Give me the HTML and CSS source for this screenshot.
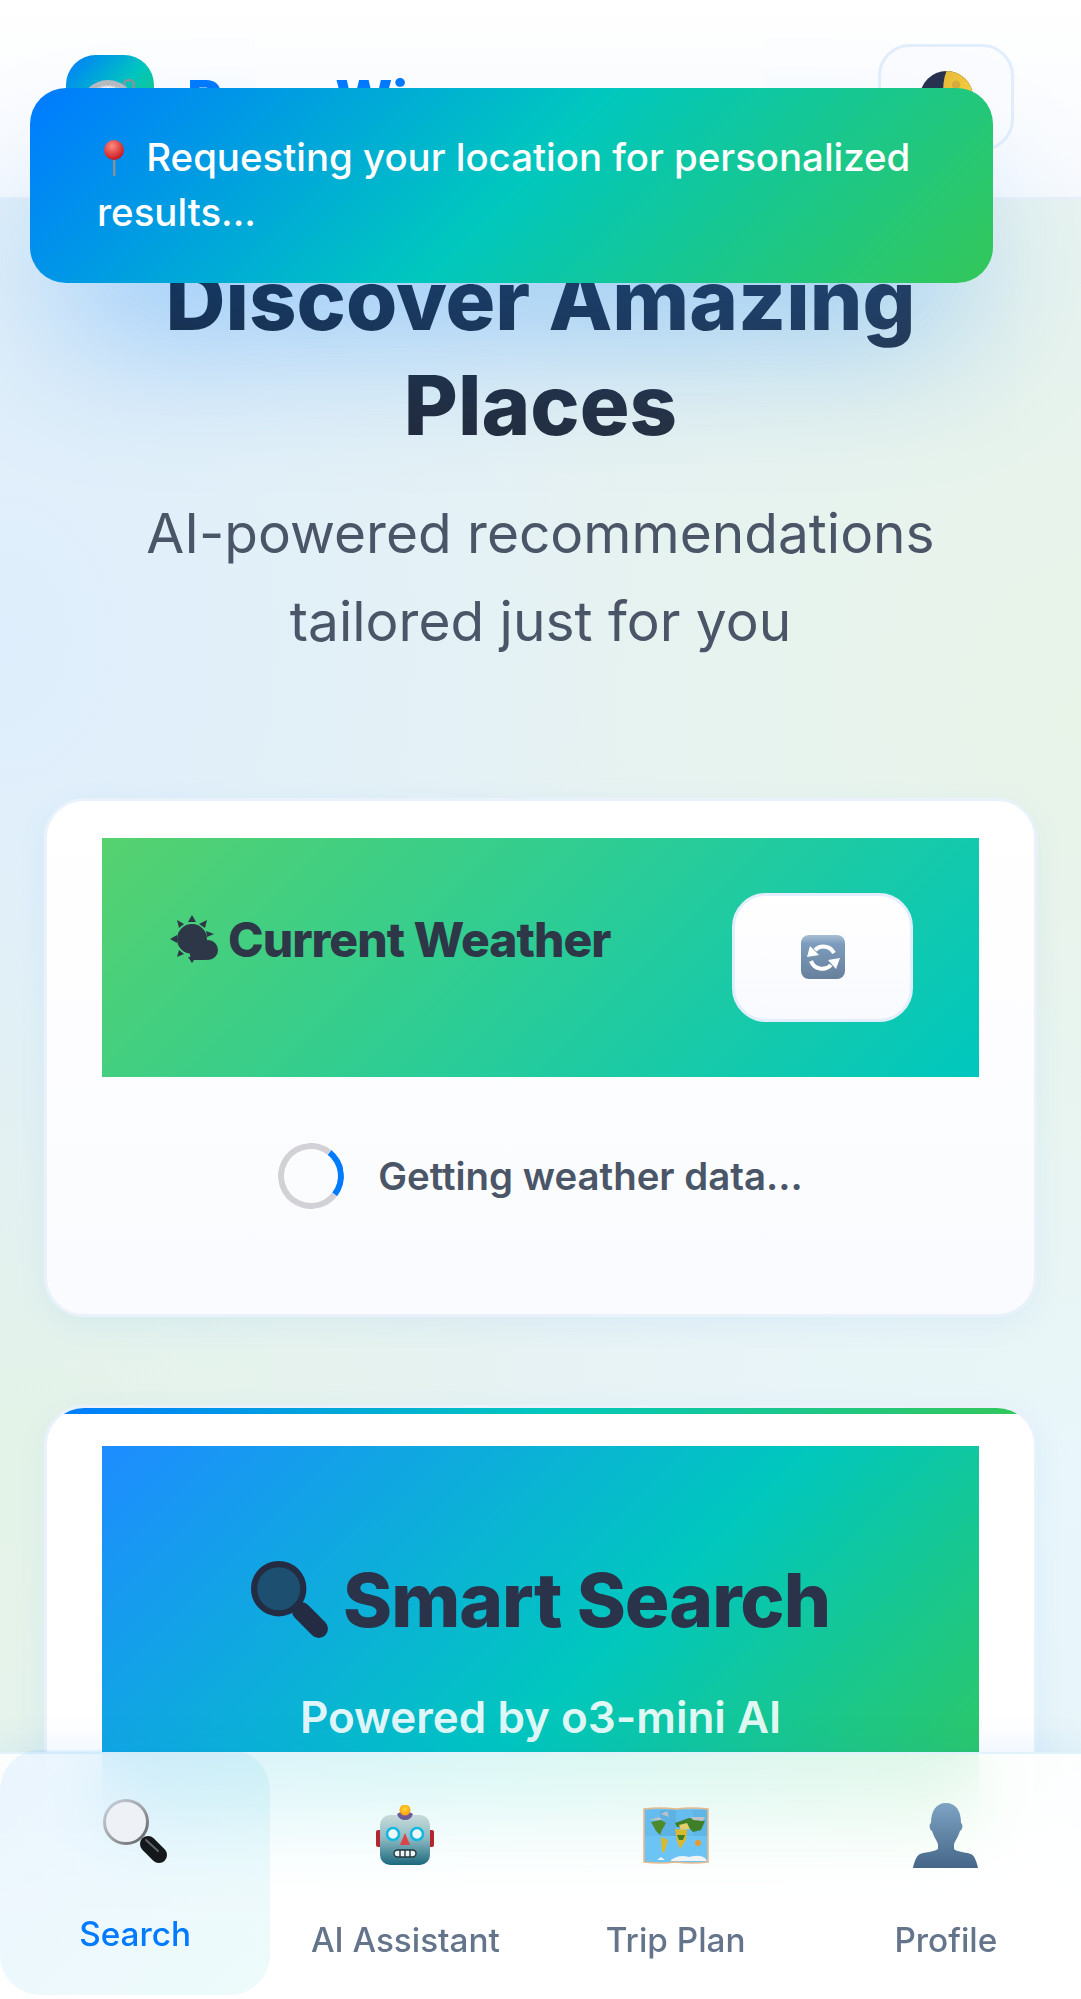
FILE: index.html
```html
<!DOCTYPE html>
<html lang="en">
<head>
    <meta charset="UTF-8">
    <meta name="viewport" content="width=device-width, initial-scale=1.0">
    <title>RoamWise</title>
    <link rel="stylesheet" href="styles.css">
</head>
<body>
    <div class="app">
        <header class="app-header">
            <div class="brand">
                <div class="brand-logo">
                    <svg class="brand-compass" viewBox="0 0 60 60">
                        <circle cx="49" cy="9" r="5" fill="none" stroke="#8e9399" stroke-width="2.5"/>
                        <circle cx="28" cy="32" r="28" fill="#b9bcc0"/>
                        <circle cx="28" cy="32" r="22" fill="#f4f5f6" stroke="#d5d7da" stroke-width="2" stroke-dasharray="2 2"/>
                        <path d="M40 20 L32 30 L28 28 Z" fill="#e0403a"/>
                    </svg>
                </div>
                <span class="brand-name">RoamWise</span>
            </div>
            <button class="theme-toggle">
                <svg class="theme-moon" viewBox="0 0 50 50">
                    <defs>
                        <linearGradient id="moonLight" x1="0" y1="0" x2="1" y2="1">
                            <stop offset="0" stop-color="#e8b93a"/>
                            <stop offset="1" stop-color="#ffd83a"/>
                        </linearGradient>
                    </defs>
                    <circle cx="25" cy="25" r="25" fill="#27324e"/>
                    <path d="M25 0 A25 25 0 0 1 25 50 Q21 38 22 25 Q21 10 25 0 Z" fill="url(#moonLight)"/>
                    <circle cx="34" cy="13" r="4" fill="#d9ab3a"/>
                </svg>
            </button>
        </header>

        <div class="toast">
            <svg class="toast-pin" viewBox="0 0 24 36">
                <defs>
                    <radialGradient id="pinHead" cx="0.4" cy="0.3" r="0.7">
                        <stop offset="0" stop-color="#ff8a80"/>
                        <stop offset="1" stop-color="#c9161d"/>
                    </radialGradient>
                </defs>
                <rect x="11" y="16" width="2.4" height="20" fill="#8c8f94"/>
                <circle cx="12" cy="10" r="10" fill="url(#pinHead)"/>
            </svg>
            Requesting your location for personalized results...
        </div>

        <main class="content">
            <section class="hero">
                <h1 class="hero-title">Discover Amazing Places</h1>
                <p class="hero-subtitle">AI-powered recommendations tailored just for you</p>
            </section>

            <section class="card weather-card">
                <div class="weather-header">
                    <h2 class="weather-title">
                        <svg class="weather-icon" viewBox="0 0 48 48">
                            <g fill="#2d3748">
                                <path d="M22 0 L26 7 L18 7 Z"/>
                                <path d="M7 5 L14 9 L9 13 Z"/>
                                <path d="M37 5 L35 13 L29 9 Z"/>
                                <path d="M0 24 L7 20 L7 28 Z"/>
                                <path d="M44 19 L37 22 L36 16 Z"/>
                                <path d="M7 42 L9 35 L14 39 Z"/>
                                <path d="M22 48 L18 42 L26 42 Z"/>
                                <circle cx="22" cy="24" r="15"/>
                                <circle cx="38" cy="35" r="10"/>
                                <rect x="20" y="32" width="20" height="13" rx="5"/>
                            </g>
                        </svg>
                        <span>Current Weather</span>
                    </h2>
                    <button class="refresh-button">
                        <svg class="refresh-icon" viewBox="0 0 44 44">
                            <defs>
                                <linearGradient id="refreshFill" x1="0" y1="0" x2="0" y2="1">
                                    <stop offset="0" stop-color="#a9bfd4"/>
                                    <stop offset="0.2" stop-color="#7d9cbd"/>
                                    <stop offset="1" stop-color="#67809c"/>
                                </linearGradient>
                            </defs>
                            <rect width="44" height="44" rx="8" fill="url(#refreshFill)"/>
                            <g fill="none" stroke="#fff" stroke-width="4">
                                <path d="M14 15 A12 12 0 0 1 33 18"/>
                                <path d="M30 30 A12 12 0 0 1 10 26"/>
                            </g>
                            <path d="M6 22 L18 20 L9 11 Z M39 23 L27 25 L35 34 Z" fill="#fff"/>
                        </svg>
                    </button>
                </div>
                <div class="weather-loading">
                    <div class="spinner"></div>
                    <span class="loading-text">Getting weather data...</span>
                </div>
            </section>

            <section class="card search-card">
                <div class="search-header">
                    <h2 class="search-title">
                        <svg class="search-title-icon" viewBox="0 0 76 76">
                            <circle cx="27" cy="27" r="24" fill="#1c4f70" stroke="#232c43" stroke-width="6"/>
                            <path d="M49 49 L66 66" stroke="#232c43" stroke-width="18" stroke-linecap="round"/>
                        </svg>
                        <span>Smart Search</span>
                    </h2>
                    <p class="search-subtitle">Powered by o3-mini AI</p>
                </div>
            </section>
        </main>

        <nav class="bottom-nav">
            <a class="nav-item active">
                <span class="nav-icon">
                    <svg class="icon-search" viewBox="0 0 64 66">
                        <defs>
                            <linearGradient id="lensRing" x1="0" y1="0" x2="1" y2="1">
                                <stop offset="0" stop-color="#c9d3e4"/>
                                <stop offset="0.5" stop-color="#a2a5a9"/>
                                <stop offset="1" stop-color="#5c5d5f"/>
                            </linearGradient>
                        </defs>
                        <path d="M45 46 L56 57" stroke="#15181b" stroke-width="16" stroke-linecap="round"/>
                        <path d="M43 42 L55 53" stroke="#5f656a" stroke-width="2" stroke-linecap="round"/>
                        <circle cx="23" cy="24" r="21.5" fill="#eef1f5" stroke="url(#lensRing)" stroke-width="3"/>
                    </svg>
                </span>
                <span class="nav-label">Search</span>
            </a>
            <a class="nav-item">
                <span class="nav-icon">
                    <svg class="icon-robot" viewBox="0 0 58 60">
                        <defs>
                            <linearGradient id="robotFace" x1="0" y1="0" x2="0" y2="1">
                                <stop offset="0" stop-color="#c8dbda"/>
                                <stop offset="0.45" stop-color="#8fbcc4"/>
                                <stop offset="1" stop-color="#1c6a7d"/>
                            </linearGradient>
                            <radialGradient id="robotBulb" cx="0.5" cy="0.4" r="0.6">
                                <stop offset="0" stop-color="#ffd930"/>
                                <stop offset="1" stop-color="#fb9a12"/>
                            </radialGradient>
                        </defs>
                        <rect x="0" y="25" width="6" height="17" rx="2" fill="#b3262d"/>
                        <rect x="52" y="25" width="6" height="17" rx="2" fill="#b3262d"/>
                        <rect x="4" y="10" width="50" height="50" rx="10" fill="url(#robotFace)"/>
                        <path d="M21 9 Q29 3 37 9 Q35 15 29 15 Q23 15 21 9 Z" fill="#6a5b96"/>
                        <circle cx="29" cy="5" r="5.5" fill="url(#robotBulb)"/>
                        <circle cx="17" cy="29" r="6" fill="#eef9fb" stroke="#14b7e0" stroke-width="2.6"/>
                        <circle cx="41" cy="29" r="6" fill="#eef9fb" stroke="#14b7e0" stroke-width="2.6"/>
                        <path d="M29 28 L34 40 L24 40 Z" fill="#d8454a"/>
                        <rect x="18" y="45" width="22" height="7" rx="3.5" fill="#eef3f3" stroke="#23383f" stroke-width="1.4"/>
                        <path d="M24 45 V52 M29 45 V52 M34 45 V52" stroke="#23383f" stroke-width="1.4"/>
                    </svg>
                </span>
                <span class="nav-label">AI Assistant</span>
            </a>
            <a class="nav-item">
                <span class="nav-icon">
                    <svg class="icon-map" viewBox="0 0 66 57">
                        <path d="M1 2 Q17 0 33 2 Q49 0 65 2 L65 55 Q49 57 33 55 Q17 57 1 55 Z" fill="#6cc4f5" stroke="#e6b98c" stroke-width="1.6"/>
                        <rect x="17" y="3" width="16" height="26" fill="#4f9fd2" opacity="0.5"/>
                        <rect x="50" y="3" width="14" height="26" fill="#4f9fd2" opacity="0.4"/>
                        <rect x="2" y="3" width="15" height="26" fill="#4f9fd2" opacity="0.2"/>
                        <rect x="33" y="3" width="17" height="26" fill="#4f9fd2" opacity="0.2"/>
                        <path d="M8 15 L18 13 L23 16 L19 23 L17 28 L13 24 Z" fill="#4d8a2b"/>
                        <path d="M18 30 L25 33 L21 46 L19 44 Z" fill="#d9b92e"/>
                        <path d="M32 16 L46 11 L62 14 L58 23 L50 25 L46 21 L34 20 Z" fill="#3f7f2a"/>
                        <path d="M32 22 L44 23 L43 33 L37 42 L34 34 Z" fill="#d9b92e"/>
                        <path d="M36 18 L44 16 L47 22 L38 23 Z" fill="#e4cd6b"/>
                        <path d="M34 28 L42 28 L40 33 L36 33 Z" fill="#3f7f2a"/>
                        <circle cx="55" cy="36" r="3" fill="#e89a2c"/>
                        <path d="M6 13 L16 10 L20 13 Z M26 10 L24 4 L18 7 Z M48 10 L62 10 L60 14 L50 13 Z" fill="#bcc2c6"/>
                        <path d="M28 53 Q36 47 46 50 Q56 47 62 51 L64 54 L28 54 Z M14 53 L18 50 L22 53 Z" fill="#eef3f6"/>
                    </svg>
                </span>
                <span class="nav-label">Trip Plan</span>
            </a>
            <a class="nav-item">
                <span class="nav-icon">
                    <svg class="icon-profile" viewBox="0 0 65 65">
                        <defs>
                            <linearGradient id="profileFill" x1="0" y1="0" x2="0" y2="1">
                                <stop offset="0" stop-color="#7ea3c3"/>
                                <stop offset="1" stop-color="#456688"/>
                            </linearGradient>
                        </defs>
                        <path d="M33 0 C43 0 48 8 48 20 C50 21 50 26 47 28 C45 34 42 38 41 41 L41 46 C44 49 52 49 58 51 C62 53 64 60 65 65 L0 65 C1 60 3 53 7 51 C13 49 21 49 25 46 L25 41 C24 38 21 34 19 28 C16 26 16 21 18 20 C18 8 23 0 33 0 Z" fill="url(#profileFill)"/>
                    </svg>
                </span>
                <span class="nav-label">Profile</span>
            </a>
        </nav>
    </div>
</body>
</html>
```

FILE: styles.css
```css
* {
    box-sizing: border-box;
    margin: 0;
    padding: 0;
}

html, body {
    height: 100%;
    overflow: hidden;
}

body {
    font-family: Inter, "Noto Sans", sans-serif;
    color: #2d3748;
}

.app {
    position: relative;
    height: 100vh;
    overflow: hidden;
    background:
        radial-gradient(ellipse 620px 800px at 0% 32%, #deeefc 0%, rgba(222, 238, 252, 0) 100%),
        radial-gradient(ellipse 600px 800px at 100% 36%, #e8f4e8 0%, rgba(232, 244, 232, 0) 100%),
        radial-gradient(ellipse 560px 700px at 0% 72%, #e4f3e7 0%, rgba(228, 243, 231, 0) 100%),
        radial-gradient(ellipse 620px 800px at 100% 72%, #e9f6fc 0%, rgba(233, 246, 252, 0) 100%),
        #e6f2f3;
}

/* header */
.app-header {
    display: flex;
    justify-content: space-between;
    align-items: flex-start;
    height: 199px;
    padding: 44px 67px 0 66px;
    background: linear-gradient(180deg, #ffffff 0%, #f7fafd 100%);
    border-bottom: 2px solid #e8f1fb;
}

.brand {
    display: flex;
    align-items: center;
    gap: 33px;
    margin-top: 11px;
}

.brand-logo {
    display: flex;
    justify-content: center;
    width: 88px;
    height: 88px;
    padding-top: 21px;
    border-radius: 30px;
    background: linear-gradient(135deg, #007aff, #00c7be, #34c759);
}

.brand-compass {
    width: 60px;
    height: 60px;
}

.brand-name {
    font-size: 54px;
    font-weight: 800;
    color: #007aff;
}

.theme-toggle {
    display: flex;
    justify-content: center;
    width: 136px;
    height: 107px;
    padding-top: 24px;
    border: 3px solid #e3eefc;
    border-radius: 32px;
    background: #fbfcfe;
}

.theme-moon {
    width: 53px;
    height: 53px;
}

/* toast */
.toast {
    position: absolute;
    top: 88px;
    left: 30px;
    z-index: 20;
    width: 963px;
    height: 195px;
    padding: 42px 67px;
    border-radius: 36px;
    background: linear-gradient(135deg, #007aff, #00c7be, #34c759);
    box-shadow: 0 80px 150px -35px rgba(0, 122, 255, 0.4);
    color: #fff;
    font-size: 38.4px;
    font-weight: 500;
    line-height: 55px;
}

.toast-pin {
    width: 24px;
    height: 36px;
    margin: 0 10px 0 5px;
    vertical-align: -5px;
}

/* hero */
.hero {
    padding: 49px 100px 0;
    text-align: center;
}

.hero-title {
    padding: 0 50px;
    font-size: 83px;
    font-weight: 800;
    line-height: 105px;
    background: linear-gradient(135deg, #1a202c, #2d3748);
    -webkit-background-clip: text;
    background-clip: text;
    color: transparent;
}

.hero-subtitle {
    margin-top: 31px;
    font-size: 55px;
    line-height: 88px;
    color: #4a5568;
}

/* cards */
.card {
    margin: 0 44px;
    border: 3px solid #e9f2fb;
    border-radius: 40px;
    background: linear-gradient(180deg, #ffffff, #fafbfe);
    box-shadow: 0 8px 32px rgba(0, 122, 255, 0.06);
}

.weather-card {
    height: 519px;
    margin-top: 133px;
    padding: 37px 55px 0;
}

.weather-header {
    display: flex;
    justify-content: space-between;
    align-items: flex-start;
    height: 239px;
    padding: 55px 66px 0 68px;
    background: linear-gradient(135deg, #56d16f, #00c7be);
}

.weather-title {
    display: flex;
    align-items: center;
    gap: 10px;
    height: 92px;
    font-size: 48px;
    font-weight: 800;
    letter-spacing: -1px;
    color: #2d3748;
}

.weather-icon {
    width: 48px;
    height: 48px;
}

.refresh-button {
    display: flex;
    justify-content: center;
    align-items: center;
    width: 181px;
    height: 129px;
    border: 3px solid #e3eefc;
    border-radius: 34px;
    background: linear-gradient(180deg, #ffffff, #f9fafe);
}

.refresh-icon {
    width: 44px;
    height: 44px;
    margin-bottom: 2px;
}

.weather-loading {
    display: flex;
    justify-content: center;
    align-items: center;
    gap: 34px;
    padding-top: 66px;
}

.spinner {
    width: 66px;
    height: 66px;
    border: 6px solid #d1d1d6;
    border-top-color: #007aff;
    border-radius: 50%;
    transform: rotate(83deg);
}

.loading-text {
    font-size: 38.4px;
    font-weight: 600;
    color: #4a5568;
}

.search-card {
    position: relative;
    height: 600px;
    margin-top: 88px;
    padding: 36px 55px 0;
    overflow: hidden;
    background: #fff;
}

.search-card::before {
    content: "";
    position: absolute;
    top: 0;
    left: 0;
    right: 0;
    height: 6px;
    background: linear-gradient(90deg, #007aff, #00c7be, #34c759);
}

.search-header {
    height: 400px;
    margin-top: 2px;
    padding-top: 116px;
    background: linear-gradient(135deg, #1e8cff, #00c7be 55%, #34c759);
    text-align: center;
}

.search-title {
    display: flex;
    justify-content: center;
    align-items: center;
    gap: 14px;
    height: 76px;
    font-size: 74.5px;
    font-weight: 800;
    letter-spacing: -1px;
    color: #2a3349;
}

.search-title-icon {
    width: 78px;
    height: 78px;
}

.search-subtitle {
    margin-top: 52px;
    font-size: 44px;
    font-weight: 600;
    color: rgba(255, 255, 255, 0.9);
}

/* bottom nav */
.bottom-nav {
    position: absolute;
    left: 0;
    right: 0;
    bottom: 0;
    z-index: 10;
    display: flex;
    height: 247px;
    border-top: 2px solid rgba(0, 160, 230, 0.12);
    background: linear-gradient(180deg, rgba(255, 255, 255, 0.86), #ffffff 80%);
    backdrop-filter: blur(40px);
    box-shadow: 0 -8px 32px rgba(0, 122, 255, 0.08);
}

.nav-item {
    flex: 1;
    display: flex;
    flex-direction: column;
    align-items: center;
    padding-top: 48px;
    border-radius: 40px;
    font-size: 33.3px;
    font-weight: 500;
    color: #64748b;
}

.nav-item.active {
    color: #007aff;
    background: linear-gradient(135deg, rgba(0, 122, 255, 0.07), rgba(0, 199, 190, 0.07));
    transform: translateY(-4px);
}

.nav-item.active .nav-label {
    margin-top: 50px;
}

.nav-icon {
    display: flex;
    justify-content: center;
    align-items: center;
    height: 66px;
}

.icon-search {
    width: 64px;
    height: 66px;
}

.icon-robot {
    width: 58px;
    height: 60px;
}

.icon-map {
    width: 66px;
    height: 57px;
}

.icon-profile {
    width: 65px;
    height: 65px;
}

.nav-label {
    margin-top: 52px;
    line-height: 40px;
}
```
